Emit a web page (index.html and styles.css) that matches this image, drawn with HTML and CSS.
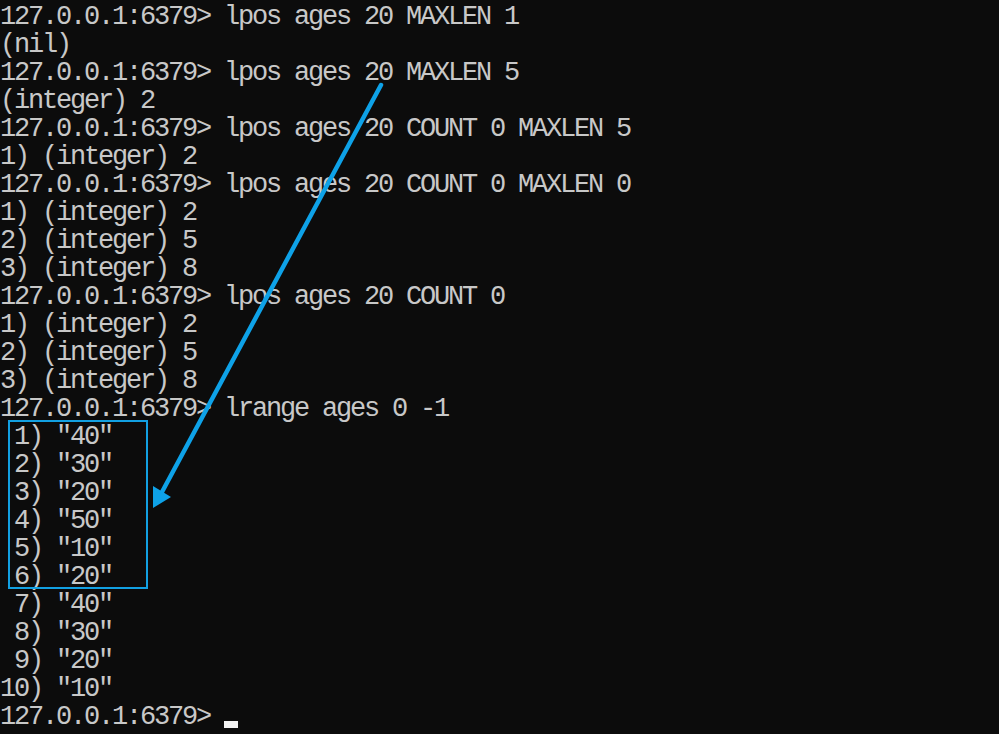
FILE: index.html
```html
<!DOCTYPE html>
<html>
<head>
<meta charset="utf-8">
<title>redis-cli</title>
<link rel="stylesheet" href="styles.css">
</head>
<body>
<div class="term">
<pre class="out">127.0.0.1:6379&gt; lpos ages 20 MAXLEN 1
(nil)
127.0.0.1:6379&gt; lpos ages 20 MAXLEN 5
(integer) 2
127.0.0.1:6379&gt; lpos ages 20 COUNT 0 MAXLEN 5
1) (integer) 2
127.0.0.1:6379&gt; lpos ages 20 COUNT 0 MAXLEN 0
1) (integer) 2
2) (integer) 5
3) (integer) 8
127.0.0.1:6379&gt; lpos ages 20 COUNT 0
1) (integer) 2
2) (integer) 5
3) (integer) 8
127.0.0.1:6379&gt; lrange ages 0 -1
 1) "40"
 2) "30"
 3) "20"
 4) "50"
 5) "10"
 6) "20"
 7) "40"
 8) "30"
 9) "20"
10) "10"
127.0.0.1:6379&gt; <span class="cursor"></span></pre>
<div class="highlight"></div>
<svg class="arrow" width="999" height="734" viewBox="0 0 999 734">
  <line x1="381" y1="85" x2="162" y2="492" stroke="#0ea2e8" stroke-width="4.5" stroke-linecap="round"/>
  <polygon points="153,508 153,486 171,497" fill="#0ea2e8"/>
</svg>
</div>
</body>
</html>
```
FILE: styles.css
```css
html, body {
  margin: 0;
  padding: 0;
  background: #0c0c0c;
  width: 999px;
  height: 734px;
  overflow: hidden;
}
.term {
  position: relative;
  width: 999px;
  height: 734px;
}
.out {
  margin: 0;
  padding: 3px 0 0 0;
  font-family: "Liberation Mono", monospace;
  font-size: 27px;
  letter-spacing: -2.2px;
  line-height: 28px;
  color: #c8c8c8;
}
.cursor {
  display: inline-block;
  width: 14px;
  height: 7px;
  background: #f2f2f2;
  vertical-align: -4px;
}
.highlight {
  position: absolute;
  left: 8px;
  top: 420px;
  width: 136px;
  height: 165px;
  border: 2px solid #12a0e2;
}
.arrow {
  position: absolute;
  left: 0;
  top: 0;
}
```
